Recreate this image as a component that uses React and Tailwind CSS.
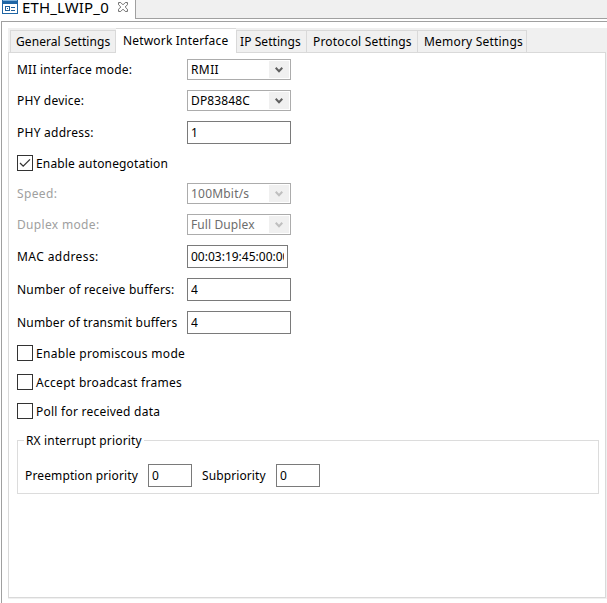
import React from "react";

function Chevron({ disabled }) {
  return (
    <span className={`mr-px flex h-[17px] w-5 items-center justify-center bg-[#f0f0f0] ${disabled ? "text-[#bfbfbf]" : "text-[#606060]"}`}>
      <svg className="mr-px" width="8" height="6" viewBox="0 0 8 6" fill="none" stroke="currentColor" strokeWidth="2">
        <path d="M0.7 0.8 L4 4.2 L7.3 0.8" />
      </svg>
    </span>
  );
}

function Select({ value, disabled, text = "" }) {
  return (
    <div className={`flex h-[21px] w-[104px] items-center justify-between border border-[#acacac] pl-[3px] ${disabled ? "text-[#6d6d6d]" : ""}`}>
      <span className={text}>{value}</span>
      <Chevron disabled={disabled} />
    </div>
  );
}

function Field({ value, width = "w-[104px]" }) {
  return (
    <div className={`flex h-[23px] items-center border border-[#7a7a7a] px-[3px] ${width}`}>
      <div className="overflow-hidden">{value}</div>
    </div>
  );
}

function Row({ label, height, disabled, text = "", children }) {
  return (
    <div className={`flex items-center ${height}`}>
      <span className={`w-[170px] shrink-0 ${disabled ? "text-[#a0a0a0]" : ""} ${text}`}>{label}</span>
      {children}
    </div>
  );
}

function Check({ label, checked, height, text = "" }) {
  return (
    <div className={`flex items-center gap-[3px] ${height}`}>
      <span className="flex size-4 items-center justify-center border border-[#333]">
        {checked && (
          <svg width="12" height="10" viewBox="0 0 12 10" fill="none" stroke="#333" strokeWidth="1.3">
            <path d="M1 5 L4.2 8.2 L11 1.4" />
          </svg>
        )}
      </span>
      <span className={`pt-[2px] ${text}`}>{label}</span>
    </div>
  );
}

function Tab({ label, width, first }) {
  return (
    <div className={`mt-[2px] flex h-[22px] items-center border-t border-r border-[#d9d9d9] ${first ? "border-l" : ""} ${width}`}>
      {label}
    </div>
  );
}

export default function App() {
  return (
    <div className="flex h-[603px] w-[607px] flex-col overflow-hidden bg-white font-['Noto_Sans',sans-serif] text-[12px] leading-4 whitespace-nowrap text-black">
      <div className="flex h-[19px] shrink-0">
        <div className="flex w-[135px] items-start">
          <svg className="ml-[2px] shrink-0" width="16" height="14" viewBox="0 0 16 14">
            <rect x="0.5" y="0.5" width="15" height="13" fill="#fff" stroke="#1f66a5" />
            <rect width="16" height="4" fill="#1f66a5" />
            <rect x="1" y="0" width="14" height="1" fill="#7fb2dc" />
            <rect x="3.500" y="6.500" width="4" height="4" fill="#fff" stroke="#1f5f9a" />
            <rect x="5" y="8" width="1" height="1" fill="#1f5f9a" />
            <path d="M9 7.500h4M9 10.500h4" fill="none" stroke="#1f5f9a" />
          </svg>
          <span className="ml-[4px] text-[15px] leading-[14px] tracking-[0.15px]">ETH_LWIP_0</span>
          <svg className="mt-[2px] ml-auto mr-[7px] shrink-0" width="10" height="10" viewBox="0 0 11 11" fill="none" stroke="#707070" strokeWidth="1.1">
            <path d="M0.600 0.600h2.400l2.500 2.500l2.500 -2.500h2.400v2.400l-2.500 2.500l2.500 2.500v2.400h-2.400l-2.500 -2.500l-2.500 2.500h-2.400v-2.400l2.500 -2.500l-2.500 -2.500z" />
          </svg>
        </div>
        <div className="grow border-b border-l border-[#a0a0a0] bg-[#f0f0f0]" />
      </div>
      <div className="mt-[2px] ml-px flex grow flex-col border-t border-l border-[#a0a0a0] pt-[6px] pl-[6px]">
        <div className="flex h-[571px] flex-col bg-[#f0f0f0]">
          <div className="flex h-6 shrink-0">
            <Tab label="General Settings" width="ml-[2px] w-[106px] pl-[5px] tracking-[0.08px]" first />
            <div className="z-10 mb-[-1px] flex h-[25px] w-[120px] items-center border-t border-[#d9d9d9] bg-white pl-[7px] tracking-[0.18px]">Network Interface</div>
            <Tab label="IP Settings" width="w-[71px] border-l pl-[3px] tracking-[0.07px]" />
            <Tab label="Protocol Settings" width="w-[111px] pl-[6px] tracking-[0.18px]" />
            <Tab label="Memory Settings" width="w-[109px] pl-[6px] tracking-[0.2px]" />
          </div>
          <div className="mr-px h-[546px] border border-[#d9d9d9] bg-white pt-px pl-2">
            <Row label="MII interface mode:" height="h-[31px]" text="tracking-[0.22px]"><Select value="RMII" text="tracking-[0.4px]" /></Row>
            <Row label="PHY device:" height="h-[31px]" text="tracking-[0.2px]"><Select value="DP83848C" text="tracking-[0.12px]" /></Row>
            <Row label="PHY address:" height="h-[33px]" text="tracking-[0.25px]"><Field value="1" /></Row>
            <Check label="Enable autonegotation" checked height="h-[28px]" text="tracking-[0.15px]" />
            <Row label="Speed:" disabled height="h-[33px]" text="tracking-[0.35px]"><Select value="100Mbit/s" disabled text="tracking-[0.2px]" /></Row>
            <Row label="Duplex mode:" disabled height="h-[29px]" text="tracking-[0.33px]"><Select value="Full Duplex" disabled text="tracking-[0.1px]" /></Row>
            <Row label="MAC address:" height="h-[35px]" text="tracking-[0.42px]"><Field value="00:03:19:45:00:00" width="w-[101px]" /></Row>
            <Row label="Number of receive buffers:" height="h-[31px]" text="tracking-[0.24px]"><Field value="4" /></Row>
            <Row label="Number of transmit buffers" height="h-[35px]" text="tracking-[0.18px]"><Field value="4" /></Row>
            <Check label="Enable promiscous mode" height="h-[26px]" text="tracking-[0.3px]" />
            <Check label="Accept broadcast frames" height="h-[32px]" text="tracking-[0.3px]" />
            <Check label="Poll for received data" height="h-[26px]" text="tracking-[0.24px]" />
            <fieldset className="mt-2 mr-[6px] h-[62px] border border-[#dcdcdc] pl-[7px]">
              <legend className="ml-[-1px] px-[2px] leading-[17px] tracking-[0.15px]">RX interrupt priority</legend>
              <div className="flex items-center pt-[15px]">
                <span className="w-[123px] tracking-[0.13px]">Preemption priority</span>
                <Field value="0" width="w-11" />
                <span className="ml-[10px] w-[74px] tracking-[0.1px]">Subpriority</span>
                <Field value="0" width="w-11" />
              </div>
            </fieldset>
          </div>
        </div>
      </div>
    </div>
  );
}
